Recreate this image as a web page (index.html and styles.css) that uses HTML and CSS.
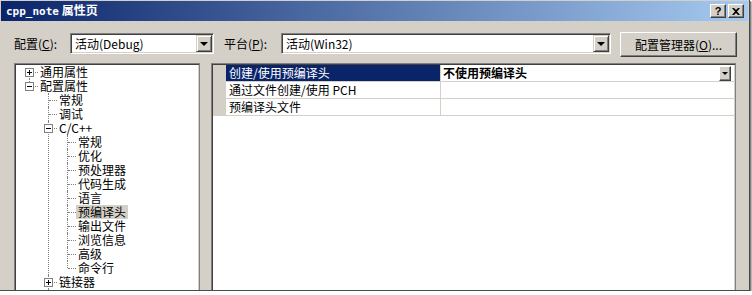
FILE: index.html
```html
<!DOCTYPE html>
<html lang="zh-CN">
<head>
    <meta charset="UTF-8">
    <title>cpp_note 属性页</title>
    <link rel="stylesheet" href="styles.css">
</head>
<body>
<div class="shot">
    <div class="window">
        <div class="titlebar">
            <span class="title"><span class="mono">cpp_note</span> 属性页</span>
            <div class="caption-btns">
                <span class="cbtn help">?</span>
                <span class="cbtn">
                    <svg width="8" height="7" viewBox="0 0 8 7"><path d="M0 0h2l2 2 2-2h2L5 3.5 8 7H6L4 5 2 7H0l3-3.5z" fill="#000"/></svg>
                </span>
            </div>
        </div>

        <div class="toolbar">
            <label class="lbl lbl1">配置(<u>C</u>):</label>
            <div class="combo c1"><span class="val">活动(Debug)</span><span class="drop"></span></div>
            <label class="lbl lbl2">平台(<u>P</u>):</label>
            <div class="combo c2"><span class="val">活动(Win32)</span><span class="drop"></span></div>
            <button class="btn">配置管理器(<u>O</u>)...</button>
        </div>

        <div class="main">
            <!-- 左侧树 -->
            <div class="tree">
                <ul class="root">
                    <li class="first"><div class="row"><span class="box plus"></span><span class="txt">通用属性</span></div></li>
                    <li class="last"><div class="row"><span class="box minus"></span><span class="txt">配置属性</span></div>
                        <ul>
                            <li><div class="row"><span class="txt">常规</span></div></li>
                            <li><div class="row"><span class="txt">调试</span></div></li>
                            <li><div class="row"><span class="box minus"></span><span class="txt">C/C++</span></div>
                                <ul>
                                    <li><div class="row"><span class="txt">常规</span></div></li>
                                    <li><div class="row"><span class="txt">优化</span></div></li>
                                    <li><div class="row"><span class="txt">预处理器</span></div></li>
                                    <li><div class="row"><span class="txt">代码生成</span></div></li>
                                    <li><div class="row"><span class="txt">语言</span></div></li>
                                    <li><div class="row"><span class="txt sel">预编译头</span></div></li>
                                    <li><div class="row"><span class="txt">输出文件</span></div></li>
                                    <li><div class="row"><span class="txt">浏览信息</span></div></li>
                                    <li><div class="row"><span class="txt">高级</span></div></li>
                                    <li class="last"><div class="row"><span class="txt">命令行</span></div></li>
                                </ul>
                            </li>
                            <li><div class="row"><span class="box plus"></span><span class="txt">链接器</span></div></li>
                            <li><div class="row"><span class="box plus"></span><span class="txt">清单工具</span></div></li>
                        </ul>
                    </li>
                </ul>
            </div>

            <!-- 属性表 -->
            <div class="grid">
                <div class="prow">
                    <div class="gut"></div>
                    <div class="pname active">创建/使用预编译头</div>
                    <div class="pval strong">不使用预编译头<span class="mini-drop"></span></div>
                </div>
                <div class="prow">
                    <div class="gut"></div>
                    <div class="pname">通过文件创建/使用 PCH</div>
                    <div class="pval"></div>
                </div>
                <div class="prow">
                    <div class="gut"></div>
                    <div class="pname">预编译头文件</div>
                    <div class="pval"></div>
                </div>
            </div>
        </div>
    </div>
</div>
</body>
</html>
```

FILE: styles.css
```css
/* 整体 */
body {
    margin: 0;
    background-color: #fff;
    font-family: "Noto Sans CJK SC", sans-serif;
    font-size: 12px;
    color: #000;
}

.shot {
    width: 749px;
    height: 290px;
    border-right: 1px solid #4a4a4a;
    border-bottom: 1px solid #4a4a4a;
    box-shadow: 1px 1px 0 #808080, 2px 2px 1px #b8b8b8;
    overflow: hidden;
    background-color: #d4d0c8;
}

.window {
    padding: 1px 1px 0 1px;
}

/* 标题栏 */
.titlebar {
    height: 20px;
    background: linear-gradient(to right, #0a246a, #a6caf0);
    display: flex;
    align-items: center;
    justify-content: space-between;
    padding: 0 4px 0 5px;
}

.title {
    color: #fff;
    font-weight: bold;
    line-height: 20px;
}

.mono {
    font-family: "DejaVu Sans Mono", monospace;
    font-size: 11px;
}

.caption-btns {
    display: flex;
    gap: 2px;
}

.cbtn {
    width: 16px;
    height: 14px;
    box-sizing: border-box;
    background-color: #d4d0c8;
    border: 1px solid;
    border-color: #fff #404040 #404040 #fff;
    box-shadow: inset -1px -1px #808080;
    display: flex;
    align-items: center;
    justify-content: center;
}

.cbtn.help {
    font-family: "Liberation Sans", sans-serif;
    font-weight: bold;
    font-size: 11px;
    line-height: 12px;
}

/* 配置行 */
.toolbar {
    display: flex;
    align-items: flex-start;
    padding: 11px 0 0 13px;
}

.lbl {
    line-height: 21px;
    margin-top: 1px;
    white-space: nowrap;
}

.lbl1 {
    width: 56px;
}

.lbl2 {
    width: 57px;
    margin-left: 10px;
}

.combo {
    height: 21px;
    margin-top: 1px;
    box-sizing: border-box;
    border: 1px solid;
    border-color: #808080 #fff #fff #808080;
    box-shadow: inset 1px 1px #404040, inset -1px -1px #d4d0c8;
    background-color: #fff;
    display: flex;
    align-items: center;
    justify-content: space-between;
    padding: 1px;
}

.c1 {
    width: 144px;
}

.c2 {
    width: 330px;
}

.combo .val {
    padding-left: 3px;
    line-height: 17px;
}

.drop {
    width: 16px;
    height: 17px;
    box-sizing: border-box;
    background-color: #d4d0c8;
    border: 1px solid;
    border-color: #d4d0c8 #404040 #404040 #d4d0c8;
    box-shadow: inset 1px 1px #fff, inset -1px -1px #808080;
    display: flex;
    align-items: center;
    justify-content: center;
}

.drop::after {
    content: "";
    border-left: 4px solid transparent;
    border-right: 4px solid transparent;
    border-top: 4px solid #000;
    margin-top: 1px;
}

.btn {
    margin-left: 9px;
    width: 117px;
    height: 25px;
    font: inherit;
    background-color: #d4d0c8;
    border: 1px solid;
    border-color: #fff #404040 #404040 #fff;
    box-shadow: inset -1px -1px #808080;
    padding: 0;
}

/* 主体 */
.main {
    display: flex;
    align-items: flex-start;
    margin-top: 6px;
    padding-left: 13px;
}

.tree, .grid {
    height: 260px;
    box-sizing: border-box;
    border: 1px solid #808080;
    box-shadow: inset 1px 1px #404040, inset -1px -1px #d4d0c8;
    background-color: #fff;
    padding: 1px;
}

.tree {
    width: 186px;
}

.tree ul {
    list-style: none;
    margin: 0;
    padding: 0;
}

.tree ul ul {
    margin-left: 19px;
}

.tree li {
    position: relative;
}

/* 竖向虚线 */
.tree li::before {
    content: "";
    position: absolute;
    left: 13px;
    top: 0;
    bottom: 0;
    border-left: 1px dotted #808080;
}

.tree li.first::before {
    top: 7px;
}

.tree li.last::before {
    bottom: auto;
    height: 7px;
}

.row {
    position: relative;
    height: 14px;
    line-height: 14px;
    padding-left: 24px;
    white-space: nowrap;
}

/* 横向虚线 */
.row::before {
    content: "";
    position: absolute;
    left: 14px;
    top: 7px;
    width: 8px;
    border-top: 1px dotted #808080;
}

.txt {
    display: inline-block;
    vertical-align: top;
    height: 14px;
    line-height: 14px;
    margin-left: -2px;
    padding: 0 2px;
}

.txt.sel {
    background-color: #d4d0c8;
}

.box {
    position: absolute;
    left: 9px;
    top: 3px;
    width: 9px;
    height: 9px;
    box-sizing: border-box;
    border: 1px solid #808080;
    background-color: #fff;
    z-index: 1;
}

.box::before {
    content: "";
    position: absolute;
    left: 1px;
    top: 3px;
    width: 5px;
    height: 1px;
    background-color: #000;
}

.box.plus::after {
    content: "";
    position: absolute;
    left: 3px;
    top: 1px;
    width: 1px;
    height: 5px;
    background-color: #000;
}

/* 属性表 */
.grid {
    width: 525px;
    margin-left: 11px;
}

.prow {
    display: flex;
    height: 17px;
    line-height: 16px;
}

.gut {
    width: 13px;
    background-color: #d4d0c8;
}

.pname {
    width: 211px;
    padding-left: 3px;
    border-right: 1px solid #d4d0c8;
    border-bottom: 1px solid #d4d0c8;
    white-space: nowrap;
}

.pname.active {
    background-color: #0a246a;
    color: #fff;
}

.pval {
    flex: 1;
    display: flex;
    align-items: center;
    justify-content: space-between;
    padding: 0 3px 0 2px;
    border-bottom: 1px solid #d4d0c8;
}

.pval.strong {
    font-weight: bold;
}

.mini-drop {
    width: 12px;
    height: 15px;
    box-sizing: border-box;
    background-color: #d4d0c8;
    border: 1px solid;
    border-color: #fff #404040 #404040 #fff;
    box-shadow: inset -1px -1px #808080;
    display: flex;
    align-items: center;
    justify-content: center;
}

.mini-drop::after {
    content: "";
    border-left: 3px solid transparent;
    border-right: 3px solid transparent;
    border-top: 3px solid #000;
}
```
